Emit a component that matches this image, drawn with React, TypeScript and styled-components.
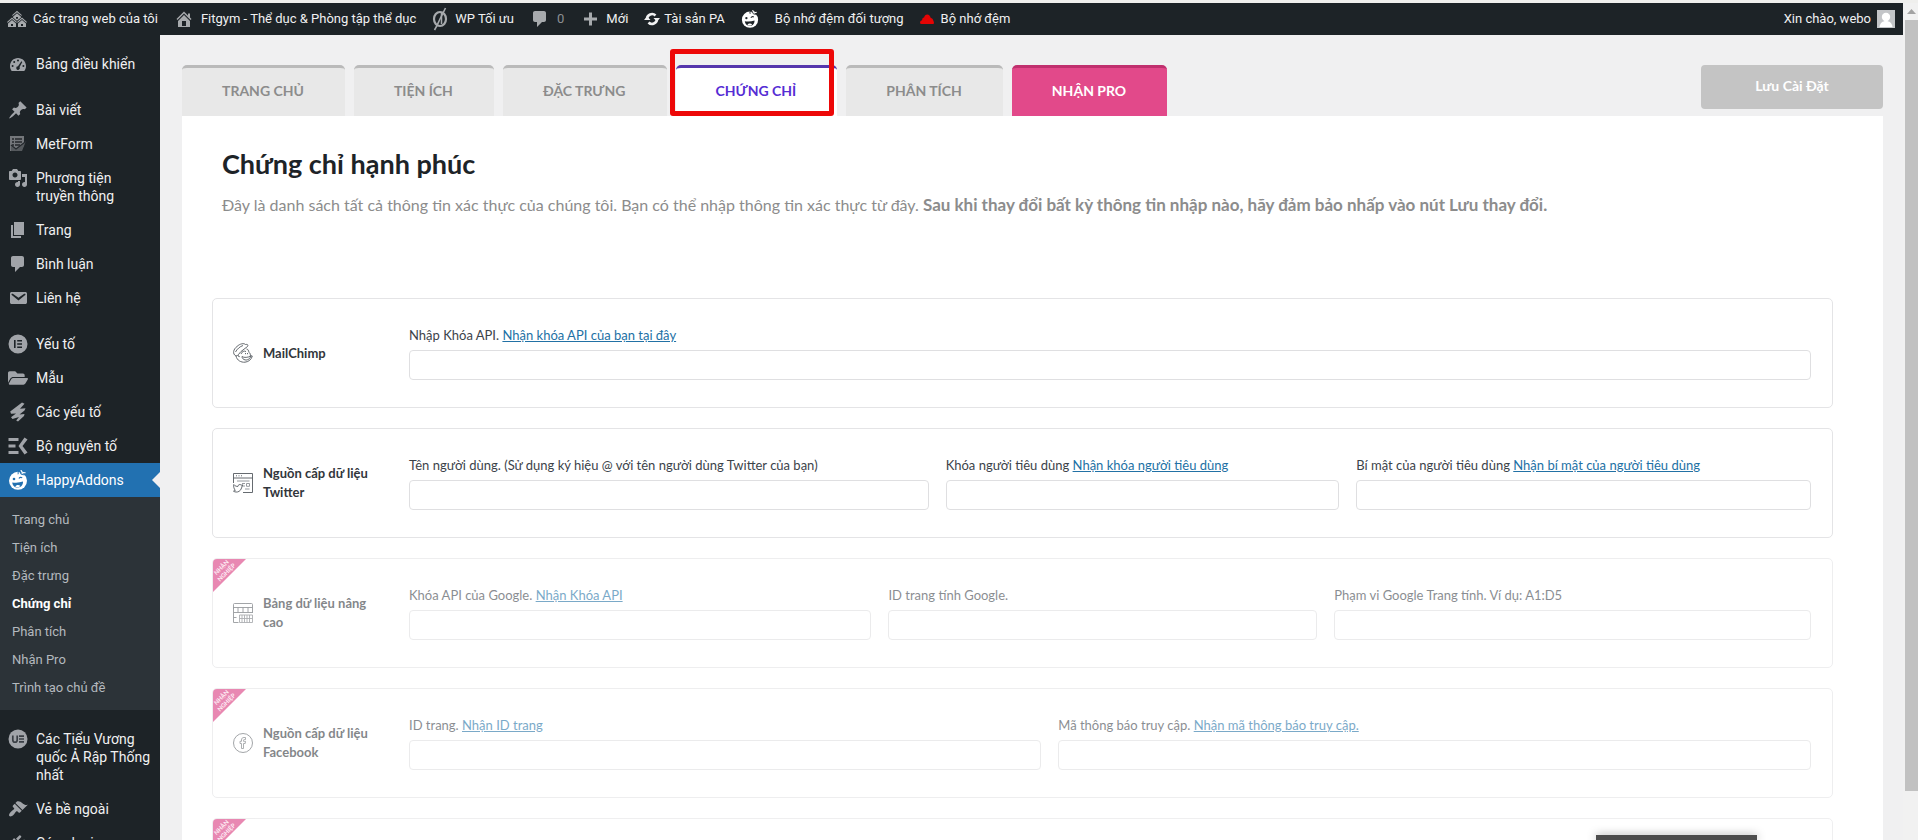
import React from "react";
import styled, { createGlobalStyle, css } from "styled-components";
import { FaFolderOpen } from "react-icons/fa";

const uiFont = `Roboto, "Noto Sans", sans-serif`;
const brandFont = `Lato, "Noto Sans", sans-serif`;

const GlobalStyle = createGlobalStyle`
  *, *::before, *::after { box-sizing: border-box; }
  body { margin: 0; background: #f0f0f1; font-family: ${uiFont}; }
  a { text-decoration: none; color: inherit; }
  ul { margin: 0; padding: 0; list-style: none; }
`;

/* ---------- shell ---------- */

const Shell = styled.div`
  display: flex;
  height: 100vh;
  overflow: hidden;
  border-top: 3px solid #efefed;
`;

const Page = styled.div`
  flex: 1;
  min-width: 0;
  display: flex;
  flex-direction: column;
`;

const Body = styled.div`
  flex: 1;
  min-height: 0;
  display: flex;
`;

const ScrollTrack = styled.div`
  width: 15px;
  padding: 17px 0 49px 2px;
  background: #f1f1f1;
  position: relative;
`;

const ScrollThumb = styled.div`
  height: 100%;
  background: #c1c1c1;
`;

const ScrollArrow = styled.svg`
  position: absolute;
  top: 6px;
  left: 4px;
`;

/* ---------- admin bar ---------- */

const AdminBar = styled.header`
  height: 32px;
  padding: 0 8px 0 7px;
  display: flex;
  align-items: center;
  justify-content: space-between;
  background: #1d2327;
  color: #f0f0f1;
  font-size: 13px;
  line-height: 32px;
`;

const BarGroup = styled.nav`
  display: flex;
  gap: 16px;
`;

const BarLink = styled.a<{ $gap?: number; $dim?: boolean }>`
  display: flex;
  align-items: center;
  gap: ${(p) => p.$gap ?? 7}px;
  white-space: nowrap;
  color: ${(p) => (p.$dim ? "#8c8f94" : "inherit")};

  svg { flex: none; color: #a7aaad; }
`;

/* ---------- side menu ---------- */

const Sidebar = styled.nav`
  flex: none;
  width: 160px;
  padding-top: 12px;
  overflow: hidden;
  background: #1d2327;
`;

const MenuItem = styled.li<{ $spaced?: boolean }>`
  margin-top: ${(p) => (p.$spaced ? 12 : 0)}px;
`;

const MenuLink = styled.a<{ $active?: boolean }>`
  position: relative;
  display: flex;
  gap: 8px;
  padding: 8px;
  font-size: 14px;
  line-height: 18px;
  color: ${(p) => (p.$active ? "#fff" : "#f0f0f1")};
  background: ${(p) => (p.$active ? "#2271b1" : "transparent")};

  svg {
    flex: none;
    margin: -1px 0;
    color: ${(p) => (p.$active ? "#fff" : "#a1a4a9")};
  }

  ${(p) =>
    p.$active &&
    css`
      &::after {
        content: "";
        position: absolute;
        right: 0;
        top: 9px;
        border: 8px solid transparent;
        border-right-color: #f0f0f1;
        border-left-width: 0;
      }
    `}
`;

const SubMenu = styled.ul`
  padding: 9px 0 8px;
  background: #2c3338;
`;

const SubLink = styled.a<{ $current?: boolean }>`
  display: block;
  padding: 0 12px;
  font-size: 13px;
  line-height: 28px;
  font-weight: ${(p) => (p.$current ? 700 : 400)};
  color: ${(p) => (p.$current ? "#fff" : "#b4b9be")};
`;

/* ---------- content ---------- */

const Main = styled.main`
  flex: 1;
  min-width: 0;
  padding: 30px 20px 0 22px;
  overflow: hidden;
  font-family: ${brandFont};
`;

const TabRow = styled.div`
  display: flex;
  justify-content: space-between;
  align-items: flex-start;
`;

const Tabs = styled.nav`
  display: flex;
  gap: 9px;
`;

const Tab = styled.a<{ $kind?: "current" | "pro" }>`
  position: relative;
  height: 51px;
  padding: 0 41px 0 40px;
  border-top: 3px solid #bababa;
  border-radius: 5px 5px 0 0;
  background: #e8e8e8;
  color: #8c8c8c;
  font-size: 14px;
  line-height: 46px;
  font-weight: 700;
  white-space: nowrap;

  ${(p) =>
    p.$kind === "current" &&
    css`
      border-top-color: #5636ad;
      background: #fff;
      color: #562dd4;

      &::after {
        content: "";
        position: absolute;
        inset: -19px 3px 0 -6px;
        border: 5px solid #ed0808;
        border-radius: 3px;
      }
    `}

  ${(p) =>
    p.$kind === "pro" &&
    css`
      border-top-color: #c0306e;
      background: #e2498a;
      color: #fff;
    `}
`;

const SaveButton = styled.button`
  width: 182px;
  height: 44px;
  border: 0;
  border-radius: 4px;
  background: #c4c4c4;
  color: #fff;
  font: 700 14px ${brandFont};
  padding: 0 0 4px;
`;

const Panel = styled.section`
  padding: 32px 50px 0 30px;
  background: #fff;
`;

const Intro = styled.div`
  padding: 0 10px;
  margin-bottom: 82px;
`;

const Title = styled.h1`
  margin: 0 0 14px;
  color: #1d2327;
  font-size: 27px;
  line-height: 32px;
  font-weight: 700;
`;

const Lead = styled.p`
  margin: 0;
  color: #8c8c8c;
  font-size: 16px;
  line-height: 22px;

  strong { font-size: 17px; }
`;

const CardList = styled.div`
  display: grid;
  gap: 20px;
`;

const Card = styled.section<{ $locked?: boolean }>`
  position: relative;
  display: flex;
  align-items: center;
  min-height: 110px;
  padding: 0 21px 0 20px;
  overflow: hidden;
  border: 1px solid #e4e4e6;
  border-radius: 5px;
  opacity: ${(p) => (p.$locked ? 0.6 : 1)};
`;

const CardHead = styled.h2`
  flex: none;
  display: flex;
  align-items: center;
  gap: 10px;
  width: 176px;
  margin: 0;
  padding-right: 26px;
  color: #32363b;
  font-size: 13px;
  line-height: 19px;
  font-weight: 700;

  svg { flex: none; }
`;

const Fields = styled.div`
  flex: 1;
  display: flex;
  gap: 17px;
`;

const Field = styled.div`
  flex: 1 1 auto;
`;

const FieldText = styled.div`
  margin-bottom: 6px;
  color: #3c434a;
  font-size: 13px;
  line-height: 18px;
  white-space: nowrap;

  a { color: #2271a5; text-decoration: underline; }
`;

const TextBox = styled.input`
  display: block;
  width: 100%;
  height: 30px;
  padding: 0 8px;
  border: 1px solid #dfdfe1;
  border-radius: 4px;
  background: #fff;
  font: 14px ${brandFont};
`;

const Ribbon = styled.svg`
  position: absolute;
  top: 0;
  left: 0;
`;

const HelpBubble = styled.aside`
  position: fixed;
  right: 161px;
  bottom: 0;
  width: 161px;
  height: 5px;
  background: #4d4d4d;
  box-shadow: 0 0 10px rgba(0, 0, 0, 0.35);
`;

/* ---------- icons ---------- */

const Glyph = ({ d, size = 20 }: { d: string; size?: number }) => (
  <svg width={size} height={size} viewBox="0 0 20 20" fill="currentColor" fillRule="evenodd" aria-hidden="true">
    <path d={d} />
  </svg>
);

const paths = {
  network:
    "M14.27 6.87L10 3.14 5.73 6.87 5 6.14l5-4.38 5 4.38zM14 8.42l-4.05 3.43L6 8.38v-.74l4-3.5 4 3.5v.78zM11 9.7V8H9v1.7h2zm-1.73 4.03L5 10 .73 13.73 0 13l5-4.38L10 13zm10 0L15 10l-4.27 3.73L10 13l5-4.38L20 13zM5 11l4 3.5V18H1v-3.5zm10 0l4 3.5V18h-8v-3.5zm-9 6v-2H4v2h2zm10 0v-2h-2v2h2z",
  home: "M16 8.5l1.53 1.53-1.06 1.06L10 4.6l-6.47 6.49-1.06-1.06L10 2.5l4 4v-2h2v4zm-6-2.46l6 5.99V18H4v-5.97zM12 17v-5H8v5h4z",
  comment: "M5 2h9c1.1 0 2 .9 2 2v7c0 1.1-.9 2-2 2h-2l-5 5v-5H5c-1.1 0-2-.9-2-2V4c0-1.1.9-2 2-2z",
  plus: "M17 8.500v3h-5v5H9v-5H4v-3h5v-5h3v5z",
  dashboard:
    "M3.76 17h12.48c1.1-1.38 1.76-3.11 1.76-5 0-4.42-3.58-8-8-8s-8 3.58-8 8c0 1.89.66 3.62 1.76 5zM10 5.5a1 1 0 1 1 0 2 1 1 0 0 1 0-2zM6.2 7a1 1 0 1 1 0 2 1 1 0 0 1 0-2zM13.4 7.2l.9.7-2.7 5.2a1.8 1.8 0 1 1-1.6-.9zM4.6 11a1 1 0 1 1 0 2 1 1 0 0 1 0-2zM15.4 11a1 1 0 1 1 0 2 1 1 0 0 1 0-2z",
  pin: "M10.44 3.02l1.82-1.82 6.36 6.35-1.83 1.82c-1.05-.68-2.48-.57-3.41.36l-.75.75c-.92.93-1.04 2.35-.35 3.41l-1.83 1.82-2.41-2.41-2.8 2.79c-.42.42-3.38 2.71-3.8 2.29s1.86-3.39 2.28-3.81l2.79-2.79L4.1 9.36l1.83-1.82c1.05.69 2.48.57 3.4-.36l.75-.75c.93-.92 1.05-2.35.36-3.41z",
  media:
    "M13 11V4c0-.55-.45-1-1-1h-1.67L9 1H5L3.67 3H2c-.55 0-1 .45-1 1v7c0 .55.45 1 1 1h10c.55 0 1-.45 1-1zM7 4.5c1.38 0 2.5 1.12 2.5 2.5S8.38 9.5 7 9.5 4.5 8.38 4.5 7 5.62 4.5 7 4.5zM14 6h5v10.5c0 1.38-1.12 2.5-2.5 2.5S14 17.88 14 16.5s1.12-2.5 2.5-2.5c.17 0 .34.02.5.05V9h-3V6zm-4 8.05V13h2v3.5c0 1.38-1.12 2.5-2.5 2.5S7 17.88 7 16.5 8.12 14 9.5 14c.17 0 .34.02.5.05z",
  page: "M6 15V2h10v13H6zm-1 1h8v2H3V5h2v11z",
  mail: "M3.87 4h13.25C18.37 4 19 4.59 19 5.79v8.42c0 1.19-.63 1.79-1.88 1.79H3.87c-1.25 0-1.88-.6-1.88-1.79V5.79c0-1.2.63-1.79 1.88-1.79zm6.62 8.6l6.74-5.53c.24-.2.43-.66.13-1.07-.29-.41-.82-.42-1.17-.17l-5.7 3.86L4.8 5.83c-.35-.25-.88-.24-1.17.17-.3.41-.11.87.13 1.07z",
  elementor: "M10 .5a9.500 9.500 0 1 1 0 19 9.500 9.500 0 0 1 0-19zM6 6v8h1.600V6zM9.200 6v1.600h4.800V6zM9.200 9.200v1.600h4.800V9.200zM9.200 12.400V14h4.800v-1.600z",
  strokes: "M14 .5l2.500 1.200-4.500 5 5.500-.4-1 2.200-5 4 5-.5-.5 2-6 5.500-1.800-1 2.800-3.500-6.500 2-1.500-1.800 5-3.700-5 .3-.8-2.300z",
  ek: "M.5 2h10v3H.5zM.5 8.500h7v3H.5zM.5 15h10v3H.5zM16.500 1.500L19.500 3.500 14.500 10l5 6.500-3 2L10.500 10z",
  brush:
    "M14.48 11.06L7.41 3.99l1.5-1.5c.5-.56 2.3-.47 3.51.32 1.21.8 1.43 1.28 2.91 2.1 1.18.64 2.45 1.26 4.45.85zm-.71.71L6.7 4.7 4.93 6.47c-.39.39-.39 1.02 0 1.41l1.06 1.06c.39.39.39 1.03 0 1.42-.6.6-1.43 1.11-2.21 1.69-.35.26-.7.53-1.01.84C1.43 14.23.4 16.08 1.4 17.07c.99 1 2.84-.03 4.18-1.36.31-.31.58-.66.85-1.02.57-.78 1.08-1.61 1.69-2.21.39-.39 1.02-.39 1.41 0l1.06 1.06c.39.39 1.02.39 1.41 0z",
  plug: "M13.11 4.36L9.87 7.6 8 5.73l3.24-3.24c.35-.34 1.05-.2 1.56.32.52.51.66 1.21.31 1.55zm-8 1.77l.91-1.12 9.01 9.01-1.19.84c-.71.71-2.63 1.16-3.82 1.16H6.14L4.9 17.26c-.59.59-1.54.59-2.12 0-.59-.58-.59-1.53 0-2.12l1.24-1.24v-3.88c0-1.13.4-3.19 1.09-3.89zm7.26 3.97l3.24-3.24c.34-.35 1.04-.21 1.55.31.52.51.66 1.21.31 1.55l-3.24 3.25z",
};

const OptimizeIcon = () => (
  <svg width="16" height="24" viewBox="0 0 16 24" fill="none" stroke="currentColor" aria-hidden="true">
    <ellipse cx="8" cy="12" rx="6" ry="7" strokeWidth="2.200" />
    <path d="M13.500 1C11 6 10 8 8 12S5 19 2.500 23" strokeWidth="1.600" />
    <path d="M9.500 6v11" strokeWidth="1.500" />
  </svg>
);

const RefreshIcon = () => (
  <svg width="16" height="16" viewBox="0 0 16 16" fill="none" aria-hidden="true">
    <g stroke="#f0f0f1" strokeWidth="2.600">
      <path d="M3 8a5 5 0 0 1 8.500-3.500M13 8a5 5 0 0 1-8.500 3.500" />
    </g>
    <path d="M16 7h-6.500l3.300 3.700zM0 9h6.500L3.200 5.300z" fill="#f0f0f1" />
  </svg>
);

const HappyFace = ({ size = 20, back }: { size?: number; back: string }) => (
  <svg width={size} height={size} viewBox="0 0 20 20" aria-hidden="true">
    <circle cx="10" cy="10.800" r="9" fill="#fff" />
    <path d="M10.200 4.200C9.500 2.800 10.200 1.500 11 .6M17 4.600c-2.500.4-4.500-.8-5-3" stroke={back} strokeWidth="1.100" fill="none" />
    <path d="M13 0c.2 2 2 3.200 4.500 2.600" stroke="#fff" strokeWidth="1.200" fill="none" />
    <circle cx="6" cy="9" r="1.300" fill={back} />
    <path d="M11 8.600c.6-1.200 2-1.600 3.200-.9" stroke={back} strokeWidth="1.200" fill="none" />
    <path d="M4.200 12.400c3.500.6 7.500.4 10.800-.8.300 3.300-2 5.800-5 6-3 .1-5.400-2-5.800-5.200z" fill={back} />
    <path d="M7.200 16.600c.8-1.800 3.800-2.200 5.200-.6-1.500 1.500-3.700 1.700-5.200.6z" fill="#fff" />
  </svg>
);

const RedCloud = () => (
  <svg width="14" height="12" viewBox="0 0 14 12" aria-hidden="true">
    <path
      d="M1.500 11Q0 11 0 9.500 0 7.500 2 7.300 2 4.800 4.200 4.300 4.800 1.500 7.300 1.500 10 1.700 10.600 4.800 13 5.300 13.400 7.800 14 9 14 10 14 11 13 11z"
      fill="#e40404"
    />
  </svg>
);

const Avatar = () => (
  <svg width="18" height="18" viewBox="0 0 18 18" aria-hidden="true">
    <path d="M0 0h18v18H0z" fill="#c3c5c8" />
    <circle cx="9" cy="7" r="4.200" fill="#fff" />
    <path d="M2.500 17c.5-4 3-6 6.500-6s6 2 6.500 6z" fill="#fff" />
  </svg>
);

const MetFormIcon = () => (
  <svg width="20" height="20" viewBox="0 0 20 20" aria-hidden="true">
    <path d="M2 2h14v10l-7 5H2z" fill="#74777b" />
    <path d="M4 5h2M7 5h7M4 8h2M7 8h7M4 11h2M7 11h5" stroke="#24292d" strokeWidth="1.400" />
    <path d="M3 12l5 3 10-8-4 10H3z" fill="#55595d" />
    <path d="M3 11l5 4L18.500 7" stroke="#24292d" strokeWidth="1.200" fill="none" />
  </svg>
);

const UltimateIcon = () => (
  <svg width="20" height="20" viewBox="0 0 20 20" aria-hidden="true">
    <circle cx="10" cy="10" r="9.500" fill="#a1a4a9" />
    <path d="M4.800 6.500v4.500c0 3 4.400 3 4.400 0V6.500M11 7.200h5M11 10h5M11 12.800h5" stroke="#3a3f45" strokeWidth="1.700" fill="none" />
  </svg>
);

const LineIcon = ({ children }: { children: React.ReactNode }) => (
  <svg width="20" height="20" viewBox="0 0 20 20" fill="none" stroke="#555a60" strokeWidth=".9" aria-hidden="true">
    {children}
  </svg>
);

const ChimpIcon = () => (
  <LineIcon>
    <path d="M3 13C-1 11 .5 6 4 3.500 7 .5 11 0 12.500 1.500c2-.5 3 .5 2 2L8 8.500c-2 2-2.500 4-5 4.500zM3 13c1 4.500 5 6.500 9 6.200 4-.4 6.500-3 7.300-6.200l-2-.5c.4-2-.8-2.600-1.300-3-.5-2-1-3.500-2.500-3.500" />
    <path d="M2.500 9C4 6 7 3.500 10 2.500M8 11c1-2.500 3-3.500 5-2.500M9 13.500c2 1.500 6 1 9-.5-1 3-4 5-7 3.500-1.500-.8-2-1.800-2-3zM12.500 10v1.200M14.500 10v1.200M5.500 12c-.8 1 .3 2.200 1.300 1.500" />
  </LineIcon>
);

const FeedIcon = () => (
  <LineIcon>
    <path d="M.5 10V.5h19v19H10M.5 5h19M3 2.800h1M5.500 2.800h1M8 2.800h1" />
    <path d="M4 8h12.500M9 10.500h3M9 13h3M13.500 10.500h3v2.800h-3zM12 16h4.500" stroke="#8b8f94" />
    <path d="M.8 11.500c1.200 1.500 2.600 2 4 2 .2-2 2.300-2.500 3.400-1.400l1.500-.3c-1 1.200-.8 5-3.700 6.600-1.800 1-4 .8-5.500-.2l1.800-.8C1 16 .3 13.500.8 11.500z" />
  </LineIcon>
);

const TableIcon = () => (
  <LineIcon>
    <path d="M.5 6V1.500q0-1 1-1h17q1 0 1 1V10M.5 4.500h19M.5 4v15.500h5M.5 9.500h19M5 4.500v5M10 4.500v5M15 4.500v5M.5 14.500h3" />
    <path d="M6.500 12h13v7.500h-13zM9 12v7.500M11.500 12v7.500M14 12v7.500M16.500 12v7.500M6.500 15.500h13" stroke="#777b80" />
  </LineIcon>
);

const FacebookIcon = () => (
  <LineIcon>
    <circle cx="10" cy="10" r="9.500" />
    <path d="M8.500 15.500v-5H7V8.300h1.500V7c0-1.800 1-2.500 2.500-2.500h1.500v2h-1c-.7 0-1 .3-1 .9v.9h2l-.3 2.200h-1.700v5z" strokeWidth=".8" />
  </LineIcon>
);

const ProRibbon = () => (
  <Ribbon width="33" height="33" viewBox="0 0 33 33" aria-hidden="true">
    <path d="M0 0h33L0 33z" fill="#d93a80" />
    <g transform="rotate(-45)" fill="#ffe3ef" fontFamily={brandFont} fontWeight="700" fontSize="6" textAnchor="middle">
      <text x="0" y="14">NHẬN</text>
      <text x="0" y="21">NGHIỆP</text>
    </g>
  </Ribbon>
);

/* ---------- data ---------- */

type Entry = { label: string; icon: React.ReactNode; spaced?: boolean; children?: string[] };

const menu: Entry[] = [
  { label: "Bảng điều khiển", icon: <Glyph d={paths.dashboard} /> },
  { label: "Bài viết", icon: <Glyph d={paths.pin} />, spaced: true },
  { label: "MetForm", icon: <MetFormIcon /> },
  { label: "Phương tiện truyền thông", icon: <Glyph d={paths.media} /> },
  { label: "Trang", icon: <Glyph d={paths.page} /> },
  { label: "Bình luận", icon: <Glyph d={paths.comment} /> },
  { label: "Liên hệ", icon: <Glyph d={paths.mail} /> },
  { label: "Yếu tố", icon: <Glyph d={paths.elementor} />, spaced: true },
  { label: "Mẫu", icon: <FaFolderOpen size={20} /> },
  { label: "Các yếu tố", icon: <Glyph d={paths.strokes} /> },
  { label: "Bộ nguyên tố", icon: <Glyph d={paths.ek} /> },
  {
    label: "HappyAddons",
    icon: <HappyFace back="#2271b1" />,
    children: ["Trang chủ", "Tiện ích", "Đặc trưng", "Chứng chỉ", "Phân tích", "Nhận Pro", "Trình tạo chủ đề"],
  },
  { label: "Các Tiểu Vương quốc Ả Rập Thống nhất", icon: <UltimateIcon />, spaced: true },
  { label: "Vẻ bề ngoài", icon: <Glyph d={paths.brush} /> },
  { label: "Các plugin", icon: <Glyph d={paths.plug} /> },
];

const tabs: { label: string; kind?: "current" | "pro" }[] = [
  { label: "TRANG CHỦ" },
  { label: "TIỆN ÍCH" },
  { label: "ĐẶC TRƯNG" },
  { label: "CHỨNG CHỈ", kind: "current" },
  { label: "PHÂN TÍCH" },
  { label: "NHẬN PRO", kind: "pro" },
];

type FieldSpec = { label: string; link?: string };

const cards: { title: string; icon: React.ReactNode; locked?: boolean; fields: FieldSpec[] }[] = [
  { title: "MailChimp", icon: <ChimpIcon />, fields: [{ label: "Nhập Khóa API.", link: "Nhận khóa API của bạn tại đây" }] },
  {
    title: "Nguồn cấp dữ liệu Twitter",
    icon: <FeedIcon />,
    fields: [
      { label: "Tên người dùng. (Sử dụng ký hiệu @ với tên người dùng Twitter của bạn)" },
      { label: "Khóa người tiêu dùng", link: "Nhận khóa người tiêu dùng" },
      { label: "Bí mật của người tiêu dùng", link: "Nhận bí mật của người tiêu dùng" },
    ],
  },
  {
    title: "Bảng dữ liệu nâng cao",
    icon: <TableIcon />,
    locked: true,
    fields: [
      { label: "Khóa API của Google.", link: "Nhận Khóa API" },
      { label: "ID trang tính Google." },
      { label: "Phạm vi Google Trang tính. Ví dụ: A1:D5" },
    ],
  },
  {
    title: "Nguồn cấp dữ liệu Facebook",
    icon: <FacebookIcon />,
    locked: true,
    fields: [
      { label: "ID trang.", link: "Nhận ID trang" },
      { label: "Mã thông báo truy cập.", link: "Nhận mã thông báo truy cập." },
    ],
  },
  { title: "", icon: null, locked: true, fields: [] },
];

/* ---------- page ---------- */

export default function App() {
  return (
    <>
      <GlobalStyle />
      <Shell>
        <Page>
          <AdminBar>
            <BarGroup>
              <BarLink href="#" $gap={6}><Glyph d={paths.network} />Các trang web của tôi</BarLink>
              <BarLink href="#"><Glyph d={paths.home} />Fitgym - Thể dục &amp; Phòng tập thể dục</BarLink>
              <BarLink href="#"><OptimizeIcon />WP Tối ưu</BarLink>
              <BarLink href="#" $dim><Glyph d={paths.comment} />0</BarLink>
              <BarLink href="#" $gap={6}><Glyph d={paths.plus} />Mới</BarLink>
              <BarLink href="#" $gap={4}><RefreshIcon />Tài sản PA</BarLink>
              <BarLink href="#" aria-label="HappyAddons"><HappyFace size={18} back="#1d2327" /></BarLink>
              <BarLink href="#">Bộ nhớ đệm đối tượng</BarLink>
              <BarLink href="#"><RedCloud />Bộ nhớ đệm</BarLink>
            </BarGroup>
            <BarLink href="#" $gap={6}>Xin chào, webo<Avatar /></BarLink>
          </AdminBar>

          <Body>
            <Sidebar>
              <ul>
                {menu.map((m) => (
                  <MenuItem key={m.label} $spaced={m.spaced}>
                    <MenuLink href="#" $active={!!m.children}>{m.icon}<span>{m.label}</span></MenuLink>
                    {m.children && (
                      <SubMenu>
                        {m.children.map((c) => (
                          <li key={c}><SubLink href="#" $current={c === "Chứng chỉ"}>{c}</SubLink></li>
                        ))}
                      </SubMenu>
                    )}
                  </MenuItem>
                ))}
              </ul>
            </Sidebar>

            <Main>
              <TabRow>
                <Tabs>
                  {tabs.map((t) => <Tab key={t.label} href="#" $kind={t.kind}>{t.label}</Tab>)}
                </Tabs>
                <SaveButton type="button">Lưu Cài Đặt</SaveButton>
              </TabRow>
              <Panel>
                <Intro>
                  <Title>Chứng chỉ hạnh phúc</Title>
                  <Lead>
                    Đây là danh sách tất cả thông tin xác thực của chúng tôi. Bạn có thể nhập thông tin xác thực từ đây.{" "}
                    <strong>Sau khi thay đổi bất kỳ thông tin nhập nào, hãy đảm bảo nhấp vào nút Lưu thay đổi.</strong>
                  </Lead>
                </Intro>
                <CardList>
                  {cards.map((c, i) => (
                    <Card key={i} $locked={c.locked}>
                      {c.locked && <ProRibbon />}
                      {c.title && <CardHead>{c.icon}<span>{c.title}</span></CardHead>}
                      <Fields>
                        {c.fields.map((f, j) => (
                          <Field key={j}>
                            <FieldText>
                              <label htmlFor={`field-${i}-${j}`}>{f.label}</label>
                              {f.link && <> <a href="#">{f.link}</a></>}
                            </FieldText>
                            <TextBox id={`field-${i}-${j}`} type="text" size={18} disabled={c.locked} />
                          </Field>
                        ))}
                      </Fields>
                    </Card>
                  ))}
                </CardList>
              </Panel>
            </Main>
          </Body>
        </Page>
        <ScrollTrack>
          <ScrollArrow width="9" height="5" viewBox="0 0 9 5"><path d="M0 5l4.500-5L9 5z" fill="#a3a3a3" /></ScrollArrow>
          <ScrollThumb />
        </ScrollTrack>
      </Shell>
      <HelpBubble />
    </>
  );
}
